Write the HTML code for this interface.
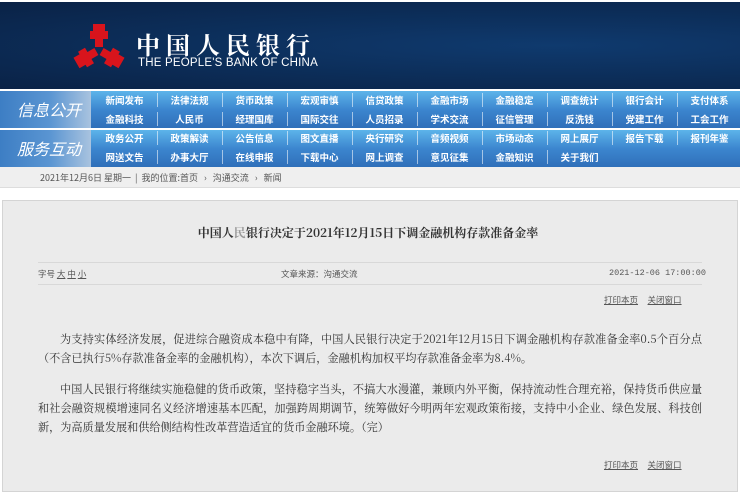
<!DOCTYPE html>
<html><head><meta charset="utf-8"><style>
*{margin:0;padding:0;box-sizing:border-box}
body{width:740px;height:498px;background:#fff;font-family:"Liberation Sans","Noto Sans CJK SC",sans-serif;position:relative;overflow:hidden}
.hdr{position:absolute;left:0;top:2px;width:740px;height:87px;background:radial-gradient(ellipse at 75% 50%,#0f3a6e 0%,#0c2d58 55%,#0a2246 100%)}
.t1{position:absolute;left:136px;top:24px;color:#fff;font-family:"Noto Serif CJK SC",serif;font-size:24px;letter-spacing:6px;font-weight:bold}
.t2{position:absolute;left:138px;top:55px;color:#fff;font-size:11.5px;letter-spacing:.2px}
.lab{position:absolute;left:0;width:91px;height:37px;background:linear-gradient(90deg,#3d7ec4 0%,#5a95d2 55%,#a9c3df 100%);color:#fff;font-style:italic;font-size:16px;line-height:37px;padding-left:17px;font-family:"Noto Sans CJK SC",sans-serif}
.row{position:absolute;left:91px;width:649px;height:37px;background:linear-gradient(#5db4ea,#3c86cf 50%,#2f6fb9)}
.c{position:absolute;width:65px;height:18px;line-height:18px;text-align:center;color:#fff;font-size:9.5px;font-weight:bold;font-family:"Noto Sans CJK SC",sans-serif}
.c:before{content:"";position:absolute;left:0;top:2px;width:1px;height:14px;background:rgba(255,255,255,.55)}
.c.f:before{display:none}
.bc{position:absolute;left:0;top:167px;width:740px;height:21px;background:#efefef;border-bottom:1px solid #ddd;font-size:9px;color:#555;line-height:21px;padding-left:40px;font-family:"Noto Sans CJK SC",sans-serif}
.box{position:absolute;left:2px;top:200px;width:736px;height:292px;background:#ebebeb;border:1px solid #d4d4d4}
.title{position:absolute;left:0;width:736px;top:224px;text-align:center;font-size:12px;font-weight:bold;color:#333;font-family:"Noto Serif CJK SC",serif}
.m{position:absolute;font-size:8.5px;color:#555;font-family:"Noto Sans CJK SC",sans-serif}
.line{position:absolute;left:38px;width:664px;height:1px;background:#d8d8d8}
.p{position:absolute;left:38px;width:664px;font-size:11.15px;line-height:19px;color:#333;text-indent:22px;font-family:"Noto Serif CJK SC",serif;text-align:justify}
u{color:#555}
</style></head><body>
<div class="hdr">
<svg style="position:absolute;left:68px;top:20px" width="62" height="56" viewBox="-31 -28 62 56">
<g fill="#d8141c">
<polygon points="-4,-3 -4,-11 -9,-11 -9,-19 -6,-19 -6,-26 6,-26 6,-19 9,-19 9,-11 4,-11 4,-3"/>
<polygon transform="rotate(120)" points="-4,-3 -4,-11 -9,-11 -9,-19 -6,-19 -6,-26 6,-26 6,-19 9,-19 9,-11 4,-11 4,-3"/>
<polygon transform="rotate(240)" points="-4,-3 -4,-11 -9,-11 -9,-19 -6,-19 -6,-26 6,-26 6,-19 9,-19 9,-11 4,-11 4,-3"/>
</g></svg>
<div class="t1">中国人民银行</div>
<div class="t2">THE PEOPLE'S BANK OF CHINA</div>
</div>
<div class="lab" style="top:91px">信息公开</div>
<div class="lab" style="top:130px">服务互动</div>
<div class="row" style="top:91px"></div>
<div class="row" style="top:130px"></div>
<div class="bc">2021年12月6日 星期一 &nbsp;| &nbsp;我的位置:首页 &nbsp;&nbsp;› &nbsp;&nbsp;沟通交流 &nbsp;&nbsp;› &nbsp;&nbsp;新闻</div>
<div class="box"></div>
<div class="title">中国人<span style="color:#999">民</span>银行决定于2021年12月15日下调金融机构存款准备金率</div>
<div class="m" style="left:38px;top:268px">字号 <u>大</u> <u>中</u> <u>小</u></div>
<div class="m" style="left:281px;top:268px">文章来源：沟通交流</div>
<div class="m" style="left:609px;top:268px;font-family:'Liberation Mono',monospace">2021-12-06 17:00:00</div>
<div class="line" style="top:262px"></div>
<div class="line" style="top:284px"></div>
<div class="m" style="left:604px;top:294px"><u>打印本页</u>&nbsp;&nbsp;&nbsp;&nbsp;&nbsp;<u>关闭窗口</u></div>
<div class="p" style="top:330px">为支持实体经济发展，促进综合融资成本稳中有降，中国人民银行决定于2021年12月15日下调金融机构存款准备金率0.5个百分点（不含已执行5%存款准备金率的金融机构），本次下调后，金融机构加权平均存款准备金率为8.4%。</div>
<div class="p" style="top:380px">中国人民银行将继续实施稳健的货币政策，坚持稳字当头，不搞大水漫灌，兼顾内外平衡，保持流动性合理充裕，保持货币供应量和社会融资规模增速同名义经济增速基本匹配，加强跨周期调节，统筹做好今明两年宏观政策衔接，支持中小企业、绿色发展、科技创新，为高质量发展和供给侧结构性改革营造适宜的货币金融环境。（完）</div>
<div class="m" style="left:604px;top:459px"><u>打印本页</u>&nbsp;&nbsp;&nbsp;&nbsp;&nbsp;<u>关闭窗口</u></div>
<div style="position:absolute;left:0;top:0">
<div class="c f" style="left:92px;top:91px">新闻发布</div><div class="c" style="left:157px;top:91px">法律法规</div><div class="c" style="left:222px;top:91px">货币政策</div><div class="c" style="left:287px;top:91px">宏观审慎</div><div class="c" style="left:352px;top:91px">信贷政策</div><div class="c" style="left:417px;top:91px">金融市场</div><div class="c" style="left:482px;top:91px">金融稳定</div><div class="c" style="left:547px;top:91px">调查统计</div><div class="c" style="left:612px;top:91px">银行会计</div><div class="c" style="left:677px;top:91px">支付体系</div>
<div class="c f" style="left:92px;top:110px">金融科技</div><div class="c" style="left:157px;top:110px">人民币</div><div class="c" style="left:222px;top:110px">经理国库</div><div class="c" style="left:287px;top:110px">国际交往</div><div class="c" style="left:352px;top:110px">人员招录</div><div class="c" style="left:417px;top:110px">学术交流</div><div class="c" style="left:482px;top:110px">征信管理</div><div class="c" style="left:547px;top:110px">反洗钱</div><div class="c" style="left:612px;top:110px">党建工作</div><div class="c" style="left:677px;top:110px">工会工作</div>
<div class="c f" style="left:92px;top:129px">政务公开</div><div class="c" style="left:157px;top:129px">政策解读</div><div class="c" style="left:222px;top:129px">公告信息</div><div class="c" style="left:287px;top:129px">图文直播</div><div class="c" style="left:352px;top:129px">央行研究</div><div class="c" style="left:417px;top:129px">音频视频</div><div class="c" style="left:482px;top:129px">市场动态</div><div class="c" style="left:547px;top:129px">网上展厅</div><div class="c" style="left:612px;top:129px">报告下载</div><div class="c" style="left:677px;top:129px">报刊年鉴</div>
<div class="c f" style="left:92px;top:148px">网送文告</div><div class="c" style="left:157px;top:148px">办事大厅</div><div class="c" style="left:222px;top:148px">在线申报</div><div class="c" style="left:287px;top:148px">下载中心</div><div class="c" style="left:352px;top:148px">网上调查</div><div class="c" style="left:417px;top:148px">意见征集</div><div class="c" style="left:482px;top:148px">金融知识</div><div class="c" style="left:547px;top:148px">关于我们</div>
</div>
</body></html>
